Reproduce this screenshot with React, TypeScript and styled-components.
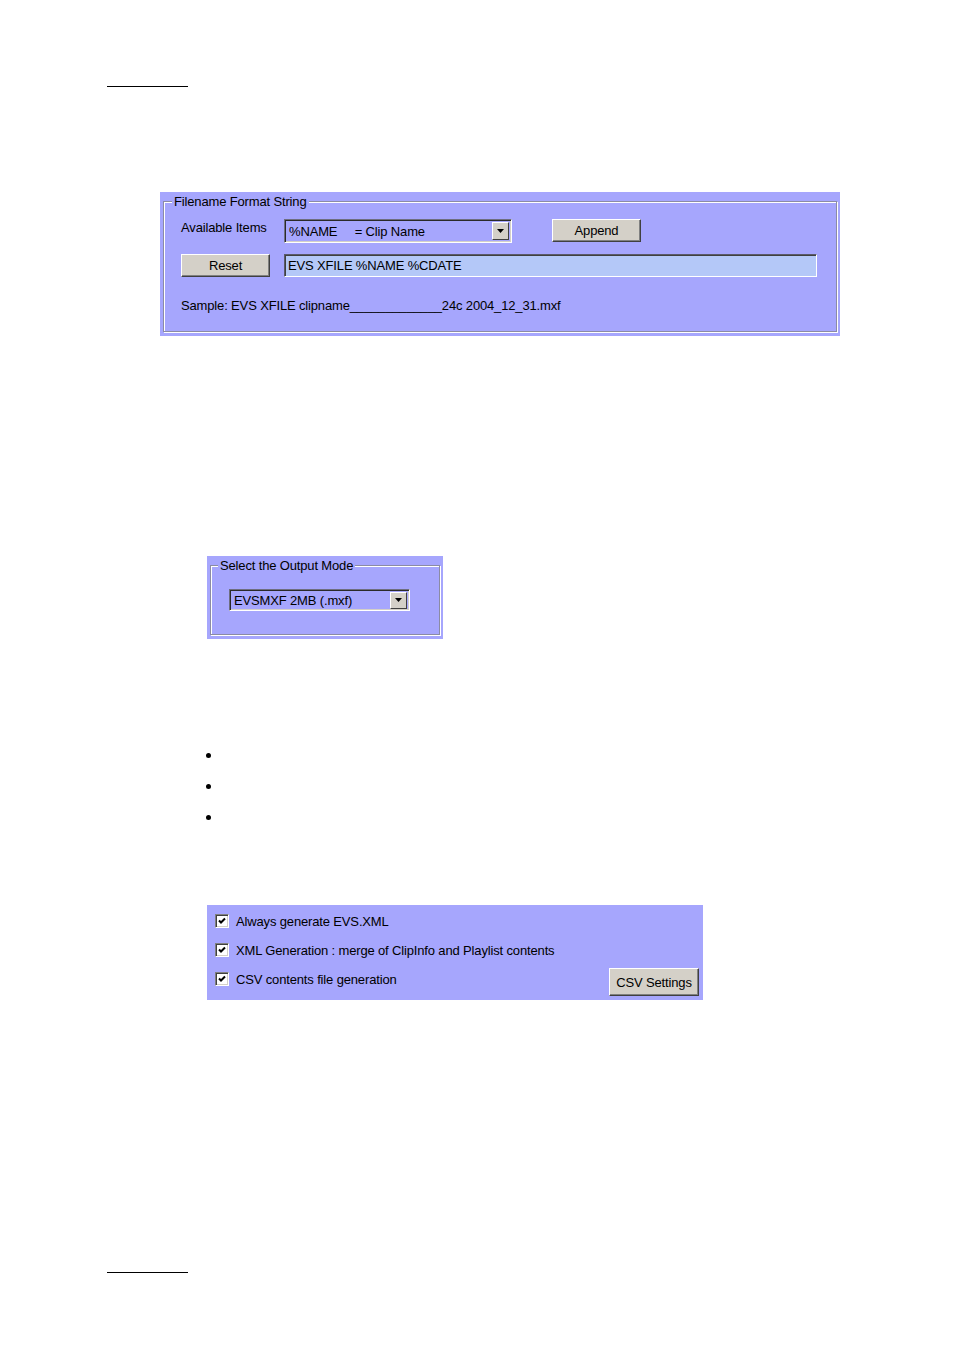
import React from 'react';
import styled, { createGlobalStyle } from 'styled-components';

const GlobalStyle = createGlobalStyle`
  body {
    margin: 0;
    background: #ffffff;
    font-family: "Liberation Sans", Arial, sans-serif;
    font-size: 13px;
    letter-spacing: -0.15px;
    color: #000;
  }
  * { box-sizing: border-box; }
`;

const LAVENDER = '#a6a6fd';
const FACE = '#d4d0c8';

const Page = styled.div`
  width: 954px;
  min-height: 1350px;
  padding-top: 86px;
  display: flex;
  flex-direction: column;
`;

const Rule = styled.div<{ $top?: number }>`
  margin: ${(p) => p.$top ?? 0}px 0 0 107px;
  width: 81px;
  height: 1px;
  background: #000;
`;

const Panel = styled.div<{ $top: number; $left: number; $w: number; $h: number }>`
  margin: ${(p) => p.$top}px 0 0 ${(p) => p.$left}px;
  width: ${(p) => p.$w}px;
  height: ${(p) => p.$h}px;
  background: ${LAVENDER};
`;

const GroupPanel = styled(Panel)`
  padding: 2px 3px 4px 3px;
`;

const GroupBox = styled.fieldset`
  margin: 0;
  padding: 0;
  height: 100%;
  border: 1px solid #8b8ba4;
  box-shadow: 1px 1px 0 #ffffff, inset 1px 1px 0 #ffffff;
  min-width: 0;
`;

const Legend = styled.legend<{ $ml: number }>`
  margin-left: ${(p) => p.$ml}px;
  padding: 0 2px;
  line-height: 15px;
  background: ${LAVENDER};
`;

const FormatBody = styled.div`
  padding: 10px 0 0 17px;
`;

const FormGrid = styled.div`
  display: grid;
  grid-template-columns: 103px 1fr;
  row-gap: 11px;
  align-items: start;
`;

const Label = styled.span`
  line-height: 15px;
  margin-top: 1px;
`;

const Inline = styled.div`
  display: flex;
  align-items: flex-start;
`;

const Combo = styled.div<{ $w: number; $h: number }>`
  width: ${(p) => p.$w}px;
  height: ${(p) => p.$h}px;
  display: flex;
  align-items: center;
  justify-content: space-between;
  padding: 0 2px 0 4px;
  border-top: 1px solid #6e6e80;
  border-left: 1px solid #6e6e80;
  border-right: 1px solid #ffffff;
  border-bottom: 1px solid #ffffff;
  box-shadow: inset 1px 1px 0 #2a2a2a, inset -1px -1px 0 #d4d0c8;
  white-space: pre;
`;

const ArrowBox = styled.div<{ $h: number }>`
  width: 17px;
  height: ${(p) => p.$h}px;
  background: ${FACE};
  border-top: 1px solid #ffffff;
  border-left: 1px solid #ffffff;
  border-right: 1px solid #404040;
  border-bottom: 1px solid #404040;
  display: flex;
  align-items: center;
  justify-content: center;
`;

const Button = styled.button<{ $w: number; $h: number; $ml?: number }>`
  margin: 0 0 0 ${(p) => p.$ml ?? 0}px;
  width: ${(p) => p.$w}px;
  height: ${(p) => p.$h}px;
  padding: 0;
  background: ${FACE};
  font-family: inherit;
  font-size: 13px;
  letter-spacing: inherit;
  color: #000;
  border-top: 1px solid #ffffff;
  border-left: 1px solid #ffffff;
  border-right: 1px solid #404040;
  border-bottom: 1px solid #404040;
  box-shadow: inset -1px -1px 0 #808080;
`;

const TextField = styled.div`
  width: 533px;
  height: 23px;
  padding: 0 3px;
  display: flex;
  align-items: center;
  background: #b4c8f8;
  border-top: 1px solid #5a5a6a;
  border-left: 1px solid #5a5a6a;
  border-right: 1px solid #ffffff;
  border-bottom: 1px solid #ffffff;
  box-shadow: inset 1px 1px 0 #404040;
`;

const Sample = styled.div`
  margin-top: 21px;
  line-height: 15px;
`;

const ModeBody = styled.div`
  padding: 16px 0 0 18px;
`;

const BulletList = styled.ul`
  margin: 101px 0 0 206px;
  padding: 0;
  list-style: none;
`;

const Bullet = styled.li`
  height: 31px;
  display: flex;
  align-items: center;
  &::before {
    content: '';
    width: 5px;
    height: 5px;
    border-radius: 50%;
    background: #000;
  }
`;

const OptionsPanel = styled(Panel)`
  display: flex;
  justify-content: space-between;
  align-items: flex-end;
  padding: 9px 4px 4px 8px;
`;

const CheckList = styled.div`
  display: flex;
  flex-direction: column;
  gap: 15px;
  align-self: flex-start;
`;

const CheckRow = styled.label`
  display: flex;
  align-items: center;
  gap: 7px;
  height: 14px;
  line-height: 15px;
`;

const Box = styled.span`
  width: 14px;
  height: 14px;
  background: #ffffff;
  border-top: 1px solid #808080;
  border-left: 1px solid #808080;
  border-right: 1px solid #ffffff;
  border-bottom: 1px solid #ffffff;
  box-shadow: inset 1px 1px 0 #404040, inset -1px -1px 0 #d4d0c8;
  display: flex;
  align-items: center;
  justify-content: center;
`;

const DownArrow = () => (
  <svg width="7" height="4" viewBox="0 0 7 4">
    <path d="M0 0h7L3.5 4z" fill="#000" />
  </svg>
);

const Check = () => (
  <svg width="8" height="8" viewBox="0 0 8 8">
    <path d="M1 3.5l2 2L7 1.5" stroke="#000" strokeWidth="2" fill="none" />
  </svg>
);

const checks = [
  'Always generate EVS.XML',
  'XML Generation : merge of ClipInfo and Playlist contents',
  'CSV contents file generation',
];

export default function App() {
  return (
    <>
      <GlobalStyle />
      <Page>
        <Rule />

        <GroupPanel $top={105} $left={160} $w={680} $h={144}>
          <GroupBox>
            <Legend $ml={8}>Filename Format String</Legend>
            <FormatBody>
              <FormGrid>
                <Label>Available Items</Label>
                <Inline>
                  <Combo $w={228} $h={24}>
                    <span>%NAME     = Clip Name</span>
                    <ArrowBox $h={18}>
                      <DownArrow />
                    </ArrowBox>
                  </Combo>
                  <Button $w={89} $h={23} $ml={40}>Append</Button>
                </Inline>
                <Button $w={89} $h={23}>Reset</Button>
                <TextField>EVS XFILE %NAME %CDATE</TextField>
              </FormGrid>
              <Sample>Sample: EVS XFILE clipname_____________24c 2004_12_31.mxf</Sample>
            </FormatBody>
          </GroupBox>
        </GroupPanel>

        <GroupPanel $top={220} $left={207} $w={236} $h={83}>
          <GroupBox>
            <Legend $ml={7}>Select the Output Mode</Legend>
            <ModeBody>
              <Combo $w={181} $h={22}>
                <span>EVSMXF 2MB (.mxf)</span>
                <ArrowBox $h={17}>
                  <DownArrow />
                </ArrowBox>
              </Combo>
            </ModeBody>
          </GroupBox>
        </GroupPanel>

        <BulletList>
          <Bullet />
          <Bullet />
          <Bullet />
        </BulletList>

        <OptionsPanel $top={72} $left={207} $w={496} $h={95}>
          <CheckList>
            {checks.map((c) => (
              <CheckRow key={c}>
                <Box>
                  <Check />
                </Box>
                {c}
              </CheckRow>
            ))}
          </CheckList>
          <Button $w={90} $h={28}>CSV Settings</Button>
        </OptionsPanel>

        <Rule $top={272} />
      </Page>
    </>
  );
}
